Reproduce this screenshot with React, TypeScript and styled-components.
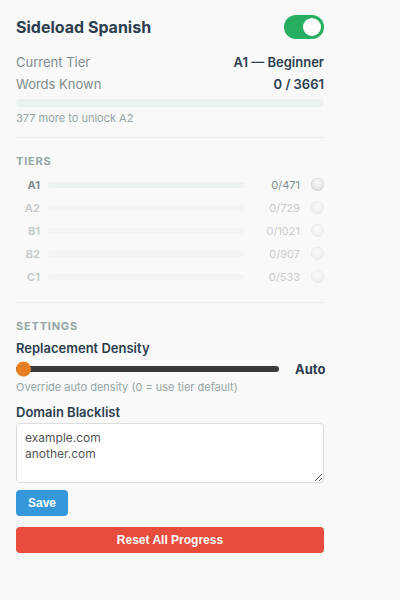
import React from "react";
import styled, { createGlobalStyle } from "styled-components";

const Global = createGlobalStyle`
  html, body { margin: 0; padding: 0; background: #f9f9f9; }
  body { font-family: Inter, "Noto Sans", sans-serif; color: #2c3e50; }
  * { box-sizing: border-box; }
`;

const Panel = styled.div`
  width: 340px;
  padding: 14px 16px 16px;
  display: flex;
  flex-direction: column;
`;

const Header = styled.div`
  display: flex;
  align-items: center;
  justify-content: space-between;
  height: 26px;
  margin-bottom: 11px;
`;

const Title = styled.h1`
  margin: 0;
  font-size: 16px;
  font-weight: 700;
  color: #2c3e50;
`;

const Toggle = styled.div<{ $on: boolean }>`
  width: 40px;
  height: 24px;
  border-radius: 12px;
  background: ${(p) => (p.$on ? "#27ae60" : "#ccc")};
  position: relative;
  &::after {
    content: "";
    position: absolute;
    top: 3px;
    left: ${(p) => (p.$on ? "19px" : "3px")};
    width: 18px;
    height: 18px;
    border-radius: 50%;
    background: #fff;
  }
`;

const StatRow = styled.div`
  display: flex;
  justify-content: space-between;
  align-items: center;
  height: 22px;
  font-size: 13px;
`;

const StatLabel = styled.span`
  color: #7f8c8d;
`;

const StatValue = styled.span`
  font-weight: 600;
  color: #2c3e50;
`;

const Track = styled.div<{ $h: number }>`
  height: ${(p) => p.$h}px;
  border-radius: ${(p) => p.$h / 2}px;
  background: #ecf0f1;
  overflow: hidden;
  flex: 1;
`;

const Fill = styled.div`
  height: 100%;
  background: #27ae60;
`;

const MainBar = styled.div`
  margin-top: 4px;
  display: flex;
`;

const Hint = styled.div<{ $mt?: number }>`
  font-size: 11px;
  color: #95a5a6;
  margin-top: ${(p) => p.$mt ?? 4}px;
`;

const Divider = styled.hr<{ $mt: number }>`
  border: 0;
  border-top: 1px solid #eceeef;
  margin: ${(p) => p.$mt}px 0 0;
`;

const SectionTitle = styled.div<{ $mb: number }>`
  font-size: 11px;
  font-weight: 700;
  letter-spacing: 0.8px;
  color: #95a5a6;
  text-transform: uppercase;
  margin-top: 16px;
  margin-bottom: ${(p) => p.$mb}px;
`;

const TierList = styled.div`
  display: flex;
  flex-direction: column;
`;

const TierRow = styled.div<{ $active: boolean }>`
  display: grid;
  grid-template-columns: 24px 1fr 48px 16px;
  align-items: center;
  column-gap: 8px;
  height: 23px;
  font-size: 11px;
  opacity: ${(p) => (p.$active ? 1 : 0.4)};
`;

const TierName = styled.span`
  text-align: right;
  font-weight: 700;
  color: #7f8c8d;
`;

const TierCount = styled.span`
  text-align: right;
  color: #7f8c8d;
`;

const Dot = styled.span`
  justify-self: end;
  width: 13px;
  height: 13px;
  border-radius: 50%;
  background: radial-gradient(circle at 50% 35%, #fafafa 0%, #e6e6e6 55%, #cccccc 100%);
  box-shadow: inset 0 0 0 0.5px #d4d4d4;
`;

const FieldLabel = styled.div<{ $mt: number }>`
  font-size: 13px;
  font-weight: 600;
  color: #2c3e50;
  margin-top: ${(p) => p.$mt}px;
`;

const SliderRow = styled.div`
  display: flex;
  align-items: center;
  gap: 16px;
  height: 20px;
  margin-top: 3px;
`;

const SliderTrack = styled.div`
  flex: 1;
  height: 6px;
  border-radius: 3px;
  background: #3a3a3a;
  position: relative;
`;

const Thumb = styled.span`
  position: absolute;
  left: 0;
  top: 50%;
  transform: translateY(-50%);
  width: 15px;
  height: 15px;
  border-radius: 50%;
  background: #e67e22;
`;

const SliderValue = styled.span`
  font-size: 13px;
  font-weight: 700;
  color: #2c3e50;
  width: 29px;
`;

const TextArea = styled.textarea`
  margin-top: 3px;
  width: 100%;
  height: 60px;
  border: 1px solid #dcdcdc;
  border-radius: 4px;
  background: #fff;
  padding: 6px 8px;
  font-family: Inter, "Noto Sans", sans-serif;
  font-size: 12px;
  line-height: 16px;
  color: #555;
  resize: vertical;
  display: block;
`;

const Button = styled.button<{ $variant: "save" | "danger" }>`
  display: block;
  border: 0;
  border-radius: 4px;
  color: #fff;
  font-family: "Liberation Sans", Arial, sans-serif;
  font-weight: 700;
  font-size: 12px;
  height: 26px;
  background: ${(p) => (p.$variant === "save" ? "#3498db" : "#e74c3c")};
  width: ${(p) => (p.$variant === "save" ? "52px" : "100%")};
  margin-top: ${(p) => (p.$variant === "save" ? "7px" : "11px")};
  padding: 0;
`;

const tiers = [
  { name: "A1", total: 471 },
  { name: "A2", total: 729 },
  { name: "B1", total: 1021 },
  { name: "B2", total: 907 },
  { name: "C1", total: 533 },
];

export default function App() {
  return (
    <>
      <Global />
      <Panel>
        <Header>
          <Title>Sideload Spanish</Title>
          <Toggle $on />
        </Header>
        <StatRow>
          <StatLabel>Current Tier</StatLabel>
          <StatValue>A1 — Beginner</StatValue>
        </StatRow>
        <StatRow>
          <StatLabel>Words Known</StatLabel>
          <StatValue>0 / 3661</StatValue>
        </StatRow>
        <MainBar>
          <Track $h={8}>
            <Fill style={{ width: "0%" }} />
          </Track>
        </MainBar>
        <Hint $mt={4}>377 more to unlock A2</Hint>
        <Divider $mt={12} />
        <SectionTitle $mb={5}>Tiers</SectionTitle>
        <TierList>
          {tiers.map((t, i) => (
            <TierRow key={t.name} $active={i === 0}>
              <TierName>{t.name}</TierName>
              <Track $h={6}>
                <Fill style={{ width: "0%" }} />
              </Track>
              <TierCount>0/{t.total}</TierCount>
              <Dot />
            </TierRow>
          ))}
        </TierList>
        <Divider $mt={14} />
        <SectionTitle $mb={7}>Settings</SectionTitle>
        <FieldLabel $mt={0}>Replacement Density</FieldLabel>
        <SliderRow>
          <SliderTrack>
            <Thumb />
          </SliderTrack>
          <SliderValue>Auto</SliderValue>
        </SliderRow>
        <Hint $mt={1}>Override auto density (0 = use tier default)</Hint>
        <FieldLabel $mt={10}>Domain Blacklist</FieldLabel>
        <TextArea defaultValue={"example.com\nanother.com"} />
        <Button $variant="save">Save</Button>
        <Button $variant="danger">Reset All Progress</Button>
      </Panel>
    </>
  );
}
